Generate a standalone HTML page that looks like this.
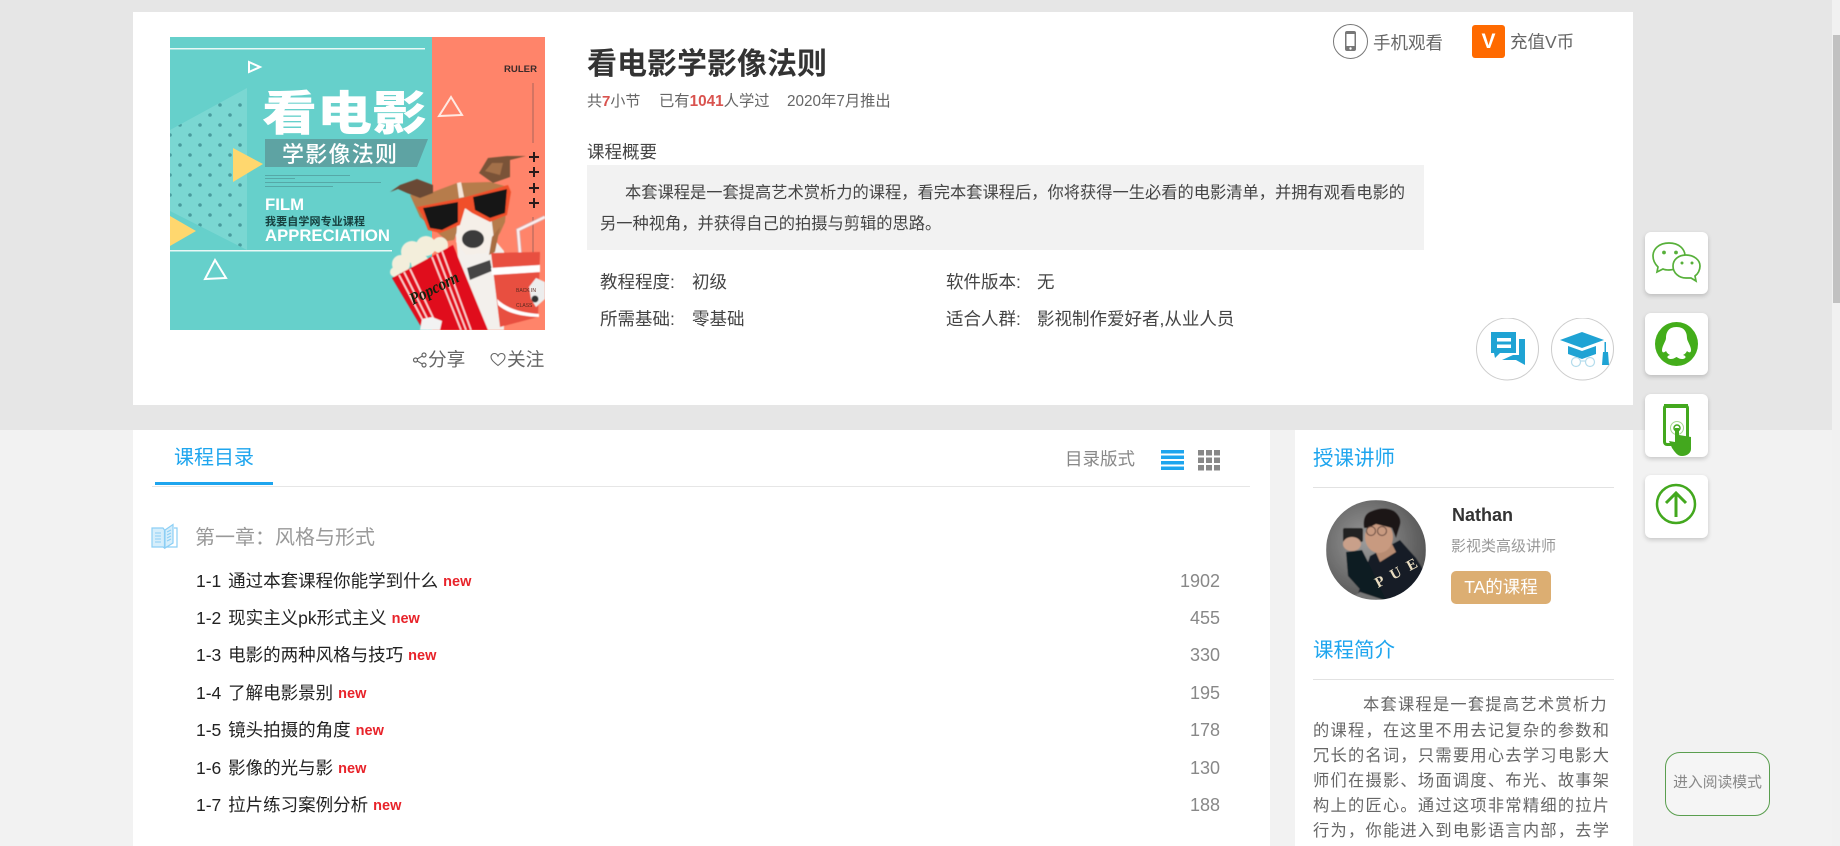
<!DOCTYPE html>
<html lang="zh-CN">
<head>
<meta charset="utf-8">
<title>看电影学影像法则</title>
<style>
html,body{margin:0;padding:0;width:1840px;height:846px;overflow:hidden;background:#f2f2f2;font-family:"Liberation Sans","Noto Sans CJK SC",sans-serif;}
.a{position:absolute;white-space:nowrap;}
.top{left:0;top:0;width:1832px;height:430px;background:#e6e6e6;}
.card{left:133px;top:12px;width:1500px;height:393px;background:#fff;}
.w{background:#fff;}
.lesson{left:196px;font-size:17.5px;line-height:28px;height:28px;color:#222;word-spacing:2px;}
.lesson b{color:#e8232a;font-size:14.5px;font-weight:bold;margin-left:5px;position:relative;top:-1px;}
.cnt{right:620px;font-size:18px;line-height:28px;height:28px;color:#888;}
.tool{left:1645px;width:63px;height:62px;background:#fff;border-radius:6px;box-shadow:0 2px 5px rgba(0,0,0,.18);}
.blue{color:#1ea5ee;}
.intro{left:1313px;font-size:16.2px;letter-spacing:1.3px;line-height:25px;height:25px;color:#666;}
.stat{font-size:17.5px;line-height:26px;height:26px;color:#444;}
</style>
</head>
<body>
<div class="a top"></div>
<div class="a card"></div>

<!-- poster -->
<svg class="a" style="left:170px;top:37px" width="375" height="293" viewBox="0 0 375 293">
<defs>
<pattern id="dots" x="0" y="3" width="20" height="20" patternUnits="userSpaceOnUse">
<circle cx="10" cy="5" r="1.8" fill="#4a9c9e"/><circle cx="20" cy="15" r="1.8" fill="#4a9c9e"/><circle cx="0" cy="15" r="1.8" fill="#4a9c9e"/>
</pattern>
<filter id="bl"><feGaussianBlur stdDeviation="0.5"/></filter>
</defs>
<rect width="375" height="293" fill="#66d0cb"/>
<rect x="262" width="113" height="293" fill="#ff846a"/>
<rect x="0" y="11" width="255" height="1.5" fill="#e8f8f6"/>
<rect x="0" y="213" width="222" height="1.5" fill="#e8f8f6"/>
<polygon points="77,51 77,213 0,174 0,93" fill="#7ad7d2"/>
<polygon points="77,51 77,213 0,174 0,93" fill="url(#dots)"/>
<polygon points="63,111 93,127 63,145" fill="#ffd76e"/>
<polygon points="0,179 26,194 0,209" fill="#ffd76e"/>
<polygon points="79,25 90,30 79,35" fill="none" stroke="#fff" stroke-width="2"/>
<polygon points="45,223 56,241 35,242" fill="none" stroke="#fff" stroke-width="2"/>
<polygon points="281,60 292,78 269,79" fill="none" stroke="#ffe9e2" stroke-width="2"/>
<text x="92" y="93" font-size="47" font-weight="900" fill="#fff" font-family="'Noto Sans CJK SC',sans-serif" textLength="165" lengthAdjust="spacingAndGlyphs">看电影</text>
<polygon points="95,102 258,102 247,130 95,130" fill="#5ea3a3"/>
<text x="112" y="125" font-size="22" font-weight="500" fill="#fff" font-family="'Noto Sans CJK SC',sans-serif" textLength="115">学影像法则</text>
<g fill="#4d8f90" opacity=".6"><rect x="95" y="138" width="85" height="1"/><rect x="95" y="141" width="30" height="1"/><rect x="95" y="145" width="116" height="1"/><rect x="95" y="149" width="68" height="1"/></g>
<text x="95" y="173" font-size="17" font-weight="bold" fill="#fff" font-family="'Liberation Sans',sans-serif" textLength="39" lengthAdjust="spacingAndGlyphs">FILM</text>
<text x="95" y="188" font-size="11" font-weight="bold" fill="#16403f" font-family="'Noto Sans CJK SC',sans-serif" textLength="100">我要自学网专业课程</text>
<text x="95" y="204" font-size="17" font-weight="bold" fill="#fff" font-family="'Liberation Sans',sans-serif" textLength="125" lengthAdjust="spacingAndGlyphs">APPRECIATION</text>
<text x="334" y="35" font-size="9.5" font-weight="bold" fill="#3a2a2a" font-family="'Liberation Sans',sans-serif" textLength="33" lengthAdjust="spacingAndGlyphs">RULER</text>
<rect x="362.5" y="46" width="1" height="60" fill="#a8645a"/>
<rect x="362.5" y="180" width="1" height="65" fill="#a8645a"/>
<g fill="#2a1a1a"><path d="M363,115h2v4h4v2h-4v4h-2v-4h-4v-2h4z"/><path d="M363,130h2v4h4v2h-4v4h-2v-4h-4v-2h4z"/><path d="M363,146h2v4h4v2h-4v4h-2v-4h-4v-2h4z"/><path d="M363,161h2v4h4v2h-4v4h-2v-4h-4v-2h4z"/></g>
<g filter="url(#bl)">
<!-- chest / neck -->
<path d="M285,190 L322,190 L324,202 L334,214 L334,293 L295,293z" fill="#f3f0ec"/>
<!-- head -->
<path d="M240,158 L263,155 L287,146 L320,145 L338,150 L335,185 L330,196 L322,208 L316,195 L290,186 L284,203 L277,204 L250,180z" fill="#b67c4c"/>
<path d="M288,172 L320,170 L324,202 L316,216 L296,218 L286,205z" fill="#f5efe8"/>
<path d="M322,200 L330,190 L325,215 L319,218z" fill="#a86e42"/>
<path d="M287,146 L291,145 L294,160 L289,161z" fill="#f5e6d8"/>
<!-- ears -->
<path d="M220,155 L230,148 L247,142 L263,148 L263,156 L250,161 L237,156 L228,152z" fill="#6b4a35"/>
<path d="M309,136 L318,121 L337,119 L356,119 L340,123 L340,140 L323,146z" fill="#7a5337"/>
<path d="M315,134 L322,126 L333,126 L330,138z" fill="#a37048"/>
<!-- glasses -->
<path d="M247,170 L292,161 L303,158 L338,148 L341,155 L337,178 L320,185 L302,176 L295,171 L290,188 L270,196 L258,193 L252,178z" fill="#f0502a"/>
<path d="M253,171 L288,165 L288,185 L272,193 L260,191z" fill="#121212"/>
<path d="M303,160 L337,152 L335,176 L320,181 L305,173z" fill="#121212"/>
<ellipse cx="303" cy="202" rx="11" ry="9" fill="#3a3a3a"/>
<!-- collar -->
<path d="M297,231 L320,223 L322,234 L300,243z" fill="#444"/>
<!-- straw + cup -->
<path d="M350,216 L348,193 L375,180" fill="none" stroke="#d9a8a8" stroke-width="4"/>
<path d="M350,216 L348,193 L375,180" fill="none" stroke="#fbeeee" stroke-width="2.4"/>
<polygon points="321,216 370,215 368,280 330,290" fill="#e8503f"/>
<polygon points="321,231 370,228 370,235 322,238" fill="#fff"/>
<path d="M327,262 Q340,275 369,277 L369,280 Q340,279 328,268z" fill="#fff"/>
<path d="M359,250 L366,241 L375,245 L375,262 L366,270 L361,262z" fill="#ededed"/>
<circle cx="365" cy="262" r="3.5" fill="#333"/>
<!-- popcorn -->
<g fill="#f3eedb"><circle cx="231" cy="227" r="9"/><circle cx="242" cy="215" r="11"/><circle cx="256" cy="209" r="10"/><circle cx="270" cy="208" r="8"/><circle cx="225" cy="235" r="5"/><circle cx="250" cy="226" r="9"/></g>
<!-- box -->
<polygon points="222,241 283,208 318,293 253,293" fill="#e0101a"/>
<g stroke="#ffd6d6" stroke-width="1.6"><line x1="229" y1="238" x2="258" y2="293"/><line x1="234" y1="235" x2="263" y2="293"/><line x1="240" y1="232" x2="269" y2="293"/><line x1="262" y1="220" x2="291" y2="293"/><line x1="267" y1="217" x2="296" y2="293"/><line x1="272" y1="214" x2="301" y2="293"/></g>
<path d="M250,293 L252,282 L262,280 L272,284 L270,293z" fill="#f2f2f2"/>
</g>
<text x="0" y="0" font-size="17" font-style="italic" font-weight="bold" fill="#13210f" font-family="'Liberation Serif',serif" transform="translate(243,268) rotate(-27)" textLength="53" lengthAdjust="spacingAndGlyphs">Popcorn</text>
<text x="346" y="255" font-size="5" fill="#5a2a20" font-family="'Liberation Sans',sans-serif">BACK IN</text>
<text x="346" y="270" font-size="5" fill="#5a2a20" font-family="'Liberation Sans',sans-serif">CLASS</text>
</svg>

<!-- share / follow -->
<svg class="a" style="left:412px;top:352px" width="16" height="16" viewBox="0 0 16 16" fill="none" stroke="#666" stroke-width="1.2"><circle cx="3.5" cy="8" r="2"/><circle cx="12" cy="3" r="2"/><circle cx="12" cy="13" r="2"/><path d="M5.2 7L10.3 4M5.2 9L10.3 12"/></svg>
<div class="a" style="left:428px;top:346px;font-size:18.7px;line-height:28px;color:#666">分享</div>
<svg class="a" style="left:490px;top:352px" width="16" height="15" viewBox="0 0 16 15" fill="none" stroke="#666" stroke-width="1.1"><path d="M8 13.5C3 9.5 1 7.5 1 5 1 3 2.5 1.5 4.3 1.5 5.8 1.5 7.3 2.4 8 4 8.7 2.4 10.2 1.5 11.7 1.5 13.5 1.5 15 3 15 5 15 7.5 13 9.5 8 13.5z"/></svg>
<div class="a" style="left:507px;top:346px;font-size:18.7px;line-height:28px;color:#666">关注</div>

<!-- title block -->
<div class="a" style="left:587px;top:44px;font-size:30px;line-height:42px;font-weight:bold;color:#333">看电影学影像法则</div>
<div class="a" style="left:587px;top:91px;font-size:15px;line-height:22px;color:#666">共<b style="color:#d9534f">7</b>小节</div>
<div class="a" style="left:659px;top:91px;font-size:15.3px;line-height:22px;color:#666">已有<b style="color:#d9534f">1041</b>人学过</div>
<div class="a" style="left:787px;top:91px;font-size:15.3px;line-height:22px;color:#666">2020年7月推出</div>
<div class="a" style="left:587px;top:139px;font-size:17.5px;line-height:26px;color:#444">课程概要</div>
<div class="a" style="left:587px;top:165px;width:837px;height:85px;background:#f2f2f2"></div>
<div class="a" style="left:625px;top:178px;font-size:16.25px;line-height:30px;color:#444">本套课程是一套提高艺术赏析力的课程，看完本套课程后，你将获得一生必看的电影清单，并拥有观看电影的</div>
<div class="a" style="left:600px;top:209px;font-size:16.25px;line-height:30px;color:#444">另一种视角，并获得自己的拍摄与剪辑的思路。</div>
<div class="a stat" style="left:600px;top:269px">教程程度:</div>
<div class="a stat" style="left:692px;top:269px">初级</div>
<div class="a stat" style="left:600px;top:306px">所需基础:</div>
<div class="a stat" style="left:692px;top:306px">零基础</div>
<div class="a stat" style="left:946px;top:269px">软件版本:</div>
<div class="a stat" style="left:1037px;top:269px">无</div>
<div class="a stat" style="left:946px;top:306px">适合人群:</div>
<div class="a stat" style="left:1037px;top:306px">影视制作爱好者,从业人员</div>

<!-- top right -->
<svg class="a" style="left:1333px;top:24px" width="36" height="36" viewBox="0 0 36 36"><circle cx="17.5" cy="17.5" r="17" fill="#fff" stroke="#777" stroke-width="1"/><rect x="12" y="7" width="11" height="20" rx="2" fill="#777"/><rect x="13.5" y="10" width="8" height="12" fill="#fff"/><circle cx="17.5" cy="24.5" r="1.2" fill="#fff"/></svg>
<div class="a" style="left:1373px;top:30px;font-size:17.5px;line-height:26px;color:#666">手机观看</div>
<div class="a" style="left:1472px;top:25px;width:33px;height:33px;background:#ff6a00;border-radius:3px;color:#fff;font-weight:bold;font-size:21px;line-height:33px;text-align:center">V</div>
<div class="a" style="left:1510px;top:29px;font-size:17.5px;line-height:26px;color:#666">充值V币</div>

<!-- blue circles -->
<svg class="a" style="left:1476px;top:318px" width="139" height="63" viewBox="0 0 139 63">
<circle cx="31.5" cy="31" r="31" fill="#fff" stroke="#ccc"/>
<circle cx="106.5" cy="31" r="31" fill="#fff" stroke="#ccc"/>
<path d="M15 14H40V35H24L19 40L18 35H15z" fill="#1fa3d4"/>
<rect x="21" y="20" width="14" height="3.5" fill="#fff"/><rect x="21" y="26.5" width="14" height="3.5" fill="#fff"/>
<path d="M43 21H49V47L40 42H26L37 37H43z" fill="#1fa3d4"/>
<path d="M84 22 L106 14 L128 22 L106 30z" fill="#1fa3d4"/>
<path d="M92 28 L106 33 L120 28 V36 L106 41 L92 36z" fill="#1fa3d4"/>
<rect x="128.5" y="24" width="1.5" height="10" fill="#1fa3d4"/>
<path d="M127 34 H132 L133 47 H126z" fill="#1fa3d4"/>
<g fill="none" stroke="#b4dcec" stroke-width="1.2"><circle cx="100" cy="44" r="4.5"/><circle cx="114" cy="44" r="4.5"/><path d="M104.5 43 H109.5"/></g>
</svg>

<!-- panels -->
<div class="a w" style="left:133px;top:430px;width:1137px;height:416px"></div>
<div class="a w" style="left:1295px;top:430px;width:338px;height:416px"></div>

<div class="a blue" style="left:174px;top:444px;font-size:20px;line-height:28px">课程目录</div>
<div class="a" style="left:152px;top:486px;width:1098px;height:1px;background:#e6e6e6"></div>
<div class="a" style="left:155px;top:482px;width:118px;height:3px;background:#1ea5ee"></div>
<div class="a" style="left:1065px;top:446px;font-size:17.5px;line-height:26px;color:#888">目录版式</div>
<svg class="a" style="left:1161px;top:450px" width="60" height="21" viewBox="0 0 60 21">
<g fill="#1ea5ee"><rect width="23" height="3.5"/><rect y="5.5" width="23" height="3.5"/><rect y="11" width="23" height="3.5"/><rect y="16.5" width="23" height="3.5"/></g>
<g fill="#888"><rect x="37" width="6" height="5.5"/><rect x="45" width="6" height="5.5"/><rect x="53" width="6" height="5.5"/><rect x="37" y="7.5" width="6" height="5.5"/><rect x="45" y="7.5" width="6" height="5.5"/><rect x="53" y="7.5" width="6" height="5.5"/><rect x="37" y="15" width="6" height="5.5"/><rect x="45" y="15" width="6" height="5.5"/><rect x="53" y="15" width="6" height="5.5"/></g>
</svg>

<svg class="a" style="left:151px;top:523px" width="27" height="27" viewBox="0 0 27 27" fill="#d6eefb" stroke="#8ccff5" stroke-width="1.2">
<path d="M1 5 H12 L13.5 7 V25 L12 24 H1z"/><path d="M14 7 L22 1.5 V20 L14 25z"/><path d="M23 5 H26 V24 H15" fill="none"/>
<path d="M4 10H10M4 13H10M4 16H10M4 19H10M16 9L20 7M16 12L20 10M16 15L20 13M16 18L20 16" fill="none" stroke-width="1"/>
</svg>
<div class="a" style="left:195px;top:524px;font-size:20px;line-height:28px;color:#999">第一章：风格与形式</div>

<div class="a lesson" style="top:567px">1-1 通过本套课程你能学到什么<b>new</b></div><div class="a cnt" style="top:567px">1902</div>
<div class="a lesson" style="top:604px">1-2 现实主义pk形式主义<b>new</b></div><div class="a cnt" style="top:604px">455</div>
<div class="a lesson" style="top:641px">1-3 电影的两种风格与技巧<b>new</b></div><div class="a cnt" style="top:641px">330</div>
<div class="a lesson" style="top:679px">1-4 了解电影景别<b>new</b></div><div class="a cnt" style="top:679px">195</div>
<div class="a lesson" style="top:716px">1-5 镜头拍摄的角度<b>new</b></div><div class="a cnt" style="top:716px">178</div>
<div class="a lesson" style="top:754px">1-6 影像的光与影<b>new</b></div><div class="a cnt" style="top:754px">130</div>
<div class="a lesson" style="top:791px">1-7 拉片练习案例分析<b>new</b></div><div class="a cnt" style="top:791px">188</div>

<!-- right panel -->
<div class="a blue" style="left:1313px;top:445px;font-size:20.5px;line-height:28px">授课讲师</div>
<div class="a" style="left:1313px;top:487px;width:301px;height:1px;background:#e2e2e2"></div>
<svg class="a" style="left:1326px;top:500px" width="100" height="100" viewBox="0 0 100 100">
<defs><radialGradient id="ag" cx="40%" cy="42%" r="65%"><stop offset="0" stop-color="#9a9a9a"/><stop offset="1" stop-color="#525252"/></radialGradient><clipPath id="ac"><circle cx="50" cy="50" r="50"/></clipPath></defs>
<g clip-path="url(#ac)" filter="url(#bl)">
<rect width="100" height="100" fill="url(#ag)"/>
<path d="M44 56 L74 40 L90 58 L100 74 L100 100 L30 100z" fill="#141e28"/>
<path d="M20 52 L36 50 L46 70 L60 100 L40 96 L22 76z" fill="#101a22"/>
<path d="M22 100 L34 92 L58 100z" fill="#777"/>
<path d="M48 48 L66 44 L70 52 L54 62z" fill="#b88c72"/>
<ellipse cx="53" cy="37" rx="14" ry="16" fill="#c89a80"/>
<path d="M38 28 Q36 14 46 11 Q58 6 68 11 Q76 17 74 25 L70 38 L66 28 L50 24 L42 28z" fill="#1f1818"/>
<circle cx="45" cy="31" r="4.5" fill="none" stroke="#5a4038" stroke-width="1"/><circle cx="56" cy="31" r="4.5" fill="none" stroke="#5a4038" stroke-width="1"/>
<rect x="17" y="28" width="20" height="14" rx="2" fill="#222"/>
<ellipse cx="26" cy="44" rx="9" ry="7" fill="#c9a08a"/>
</g>
<text x="0" y="0" font-size="15" font-weight="bold" fill="#e8dcc0" font-family="'Liberation Serif',serif" transform="translate(52,88) rotate(-28)" textLength="46">PUE</text>
</svg>
<div class="a" style="left:1452px;top:501px;font-size:18px;line-height:28px;font-weight:bold;color:#333">Nathan</div>
<div class="a" style="left:1451px;top:536px;font-size:15px;line-height:22px;color:#999">影视类高级讲师</div>
<div class="a" style="left:1451px;top:571px;width:100px;height:33px;background:#dcae72;border-radius:5px;color:#fff;font-size:17.5px;line-height:33px;text-align:center">TA的课程</div>
<div class="a blue" style="left:1313px;top:637px;font-size:20.5px;line-height:28px">课程简介</div>
<div class="a" style="left:1313px;top:679px;width:301px;height:1px;background:#e2e2e2"></div>
<div class="a intro" style="left:1363px;top:693px">本套课程是一套提高艺术赏析力</div>
<div class="a intro" style="top:719px">的课程，在这里不用去记复杂的参数和</div>
<div class="a intro" style="top:744px">冗长的名词，只需要用心去学习电影大</div>
<div class="a intro" style="top:769px">师们在摄影、场面调度、布光、故事架</div>
<div class="a intro" style="top:794px">构上的匠心。通过这项非常精细的拉片</div>
<div class="a intro" style="top:819px">行为，你能进入到电影语言内部，去学</div>

<!-- side tools -->
<div class="a tool" style="top:232px"></div>
<div class="a tool" style="top:313px"></div>
<div class="a tool" style="top:394px;height:63px"></div>
<div class="a tool" style="top:475px;height:63px"></div>
<svg class="a" style="left:1645px;top:232px" width="63" height="306" viewBox="0 0 63 306">
<g fill="#fff" stroke="#57b03a" stroke-width="1.7">
<path d="M24 11 C14 11 8 17 8 24 C8 29 10 32 13 35 L12 40 L18 37 C20 38 22 38 24 38 C33 38 40 31 40 24 C40 17 34 11 24 11z"/>
<path d="M41 23 C33 23 28 28 28 34 C28 41 34 46 41 46 C43 46 44 46 46 46 L51 49 L50 44 C53 42 55 38 55 34 C55 28 49 23 41 23z"/>
</g>
<g fill="#57b03a"><circle cx="19" cy="20.5" r="1.9"/><circle cx="31" cy="20.5" r="1.9"/><circle cx="37" cy="31" r="1.5"/><circle cx="47" cy="31" r="1.5"/></g>
<ellipse cx="31.5" cy="112" rx="21.5" ry="22" fill="#43ad1a"/>
<path d="M31.5 95 C23 95 21 101 21 106 C21 109 17 114 17 118 C17 121 19 121 21 119 C22 121 23 122 25 123 C21 124 22 127 26 127 C29 127 31 125 31.5 125 C32 125 34 127 37 127 C41 127 42 124 38 123 C40 122 41 121 42 119 C44 121 46 121 46 118 C46 114 42 109 42 106 C42 101 40 95 31.5 95z" fill="#fff"/>
<rect x="19.5" y="173.5" width="23" height="39" rx="2.5" fill="none" stroke="#43a81e" stroke-width="3"/>
<rect x="19" y="172" width="24" height="4" fill="#43a81e"/>
<circle cx="32" cy="196" r="6.5" fill="none" stroke="#a6d890" stroke-width="1"/>
<circle cx="32" cy="196" r="3" fill="none" stroke="#43a81e" stroke-width="1.5"/>
<path d="M30 196 H34 V203 L46 205 V217 C46 221 42 224 37 224 C32 224 30 220 27 216 L24 209 L30 210z" fill="#43a81e"/>
<circle cx="31" cy="272" r="19" fill="none" stroke="#43a81e" stroke-width="2.5"/>
<path d="M31 285 V262 M21 271 L31 261 L41 271" fill="none" stroke="#43a81e" stroke-width="3"/>
</svg>

<!-- reading mode -->
<div class="a" style="left:1665px;top:752px;width:103px;height:62px;border:1px solid #5a9e4f;border-radius:15px;background:#f5f5f5;color:#888;font-size:14.8px;line-height:60px;text-align:center">进入阅读模式</div>

<!-- scrollbar -->
<div class="a" style="left:1832px;top:0;width:8px;height:846px;background:#f1f1f1"></div>
<div class="a" style="left:1833px;top:35px;width:7px;height:268px;background:#c1c1c1"></div>
</body>
</html>
